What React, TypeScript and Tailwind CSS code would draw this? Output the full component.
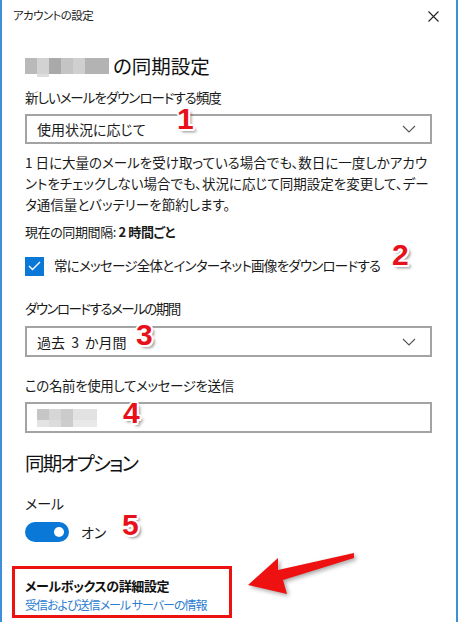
import React from "react";

const jp = "font-['Noto_Sans_CJK_JP','Noto_Sans',sans-serif] [font-feature-settings:'palt']";

function Num({ n, className }: { n: string; className: string }) {
  return (
    <div
      className={`absolute font-['Liberation_Sans',sans-serif] font-bold text-[30px] leading-none text-[#e8101a] ${className}`}
      style={{
        textShadow:
          "2px 0 0 #fff,-2px 0 0 #fff,0 2px 0 #fff,0 -2px 0 #fff,1.5px 1.5px 0 #fff,-1.5px -1.5px 0 #fff,1.5px -1.5px 0 #fff,-1.5px 1.5px 0 #fff,3px 3px 3px rgba(0,0,0,0.45)",
      }}
    >
      {n}
    </div>
  );
}

function Chevron() {
  return (
    <svg width="14" height="8" viewBox="0 0 14 8" className="text-[#555]">
      <path d="M1 1 L7 7 L13 1" fill="none" stroke="currentColor" strokeWidth="1.1" />
    </svg>
  );
}

export default function App() {
  return (
    <div className={`relative w-[458px] h-[622px] overflow-hidden bg-white border-x-2 border-[#3d8fd6] text-[#1a1a1a] ${jp}`}>
      {/* Title bar */}
      <div className="flex h-[32px] items-center justify-between pl-[11px] pr-[17px]">
        <span className="text-[11.5px] leading-none tracking-[-0.6px] text-[#222]">アカウントの設定</span>
        <svg width="11" height="11" viewBox="0 0 11 11">
          <path d="M0.5 0.5 L10.5 10.5 M10.5 0.5 L0.5 10.5" stroke="#222" strokeWidth="1.1" />
        </svg>
      </div>

      <div className="pl-[23px] pr-[24px]">
        {/* Heading */}
        <div className="mt-[21px] flex h-[26px] items-center">
          <div className="relative mr-[4px] h-[16px] w-[84px]">
            <div className="flex h-full">
              <div className="h-full w-[12px] bg-[#b9b9b9]" />
              <div className="h-full w-[12px] bg-[#d2d2d2]" />
              <div className="h-full w-[12px] bg-[#a9a9a9]" />
              <div className="h-full w-[12px] bg-[#c4c4c4]" />
              <div className="h-full w-[12px] bg-[#cfcfcf]" />
              <div className="h-full w-[24px] bg-[#b3b3b3]" />
            </div>
            <div className="absolute left-[12px] top-[16px] h-[3px] w-[12px] bg-[#dedede]" />
          </div>
          <span className="text-[19.5px] leading-[26px] text-[#111]">の同期設定</span>
        </div>

        {/* Frequency */}
        <div className="mt-[8px] text-[13.5px] leading-[20px] tracking-[-1px]">新しいメールをダウンロードする頻度</div>
        <div className="mt-[7px] flex h-[30px] items-center justify-between border-2 border-[#a3a3a3] pl-[10px] pr-[14px]">
          <span className="text-[14px] leading-none">使用状況に応じて</span>
          <Chevron />
        </div>

        <div className="mt-[8px] whitespace-nowrap text-[13.5px] leading-[21px]">
          1 日に大量のメールを受け取っている場合でも、数日に一度しかアカウ
          <br />
          ントをチェックしない場合でも、状況に応じて同期設定を変更して、デー
          <br />
          タ通信量とバッテリーを節約します。
        </div>

        <div className="mt-[7px] text-[13px] leading-[20px] tracking-[-0.4px]">
          現在の同期間隔: <span className="font-bold">2 時間ごと</span>
        </div>

        {/* Checkbox */}
        <div className="mt-[14px] flex h-[20px] items-center">
          <div className="flex h-[19px] w-[19px] items-center justify-center bg-[#0a78d6]">
            <svg width="13" height="10" viewBox="0 0 13 10">
              <path d="M1 5 L4.5 8.5 L12 1" fill="none" stroke="#fff" strokeWidth="1.4" />
            </svg>
          </div>
          <span className="ml-[10px] whitespace-nowrap text-[13.5px] leading-none tracking-[-0.75px]">
            常にメッセージ全体とインターネット画像をダウンロードする
          </span>
        </div>

        {/* Period */}
        <div className="mt-[22px] text-[13.5px] leading-[20px] tracking-[-1.5px]">ダウンロードするメールの期間</div>
        <div className="mt-[8px] flex h-[31px] items-center justify-between border-2 border-[#a3a3a3] pl-[10px] pr-[14px]">
          <span className="text-[14px] leading-none [word-spacing:3px]">過去 3 か月間</span>
          <Chevron />
        </div>

        {/* Name */}
        <div className="mt-[18px] text-[13.5px] leading-[20px] tracking-[-0.4px]">この名前を使用してメッセージを送信</div>
        <div className="mt-[7px] flex h-[31px] items-center border-2 border-[#a3a3a3] pl-[10px]">
          <div className="flex h-[18px] w-[60px] flex-col">
            <div className="flex h-[11px]">
              <div className="w-[12px] bg-[#c6c6c6]" />
              <div className="w-[12px] bg-[#d6d6d6]" />
              <div className="w-[12px] bg-[#cbcbcb]" />
              <div className="w-[24px] bg-[#e2e2e2]" />
            </div>
            <div className="flex h-[7px]">
              <div className="w-[12px] bg-[#e3e3e3]" />
              <div className="w-[12px] bg-[#dcdcdc]" />
              <div className="w-[12px] bg-[#cdcdcd]" />
              <div className="w-[24px] bg-[#e9e9e9]" />
            </div>
          </div>
        </div>

        {/* Sync options */}
        <div className="mt-[17px] text-[19.5px] leading-[26px] tracking-[-1.8px] text-[#111]">同期オプション</div>
        <div className="mt-[17px] text-[14px] leading-[20px]">メール</div>
        <div className="mt-[9px] flex h-[20px] items-center">
          <div className="flex h-[20px] w-[44px] items-center justify-end rounded-full bg-[#0a78d6] pr-[5px]">
            <div className="h-[10px] w-[10px] rounded-full bg-white" />
          </div>
          <span className="ml-[12px] text-[14px] leading-none">オン</span>
        </div>

        {/* Advanced */}
        <div className="mt-[35px] text-[13px] font-bold leading-[18px] tracking-[-0.4px] text-[#111]">メールボックスの詳細設定</div>
        <div className="mt-[1px] text-[12px] leading-[18px] tracking-[-1px] text-[#2a7dd1]">受信および送信メール サーバーの情報</div>
      </div>

      {/* Annotations */}
      <div className="absolute left-[10px] top-[566px] h-[52px] w-[220px] border-[3px] border-[#ee1111]" />
      <svg className="absolute left-0 top-0" width="458" height="622" viewBox="0 0 458 622">
        <polygon
          points="246,585 276,558 276,570 352,553 352,558 281,580 285,594"
          fill="#ee1111"
          style={{ filter: "drop-shadow(2px 2px 2px rgba(0,0,0,0.35))" }}
        />
      </svg>
      <Num n="1" className="left-[175px] top-[104px]" />
      <Num n="2" className="left-[390px] top-[240px]" />
      <Num n="3" className="left-[134px] top-[320px]" />
      <Num n="4" className="left-[121px] top-[398px]" />
      <Num n="5" className="left-[120px] top-[510px]" />
    </div>
  );
}
